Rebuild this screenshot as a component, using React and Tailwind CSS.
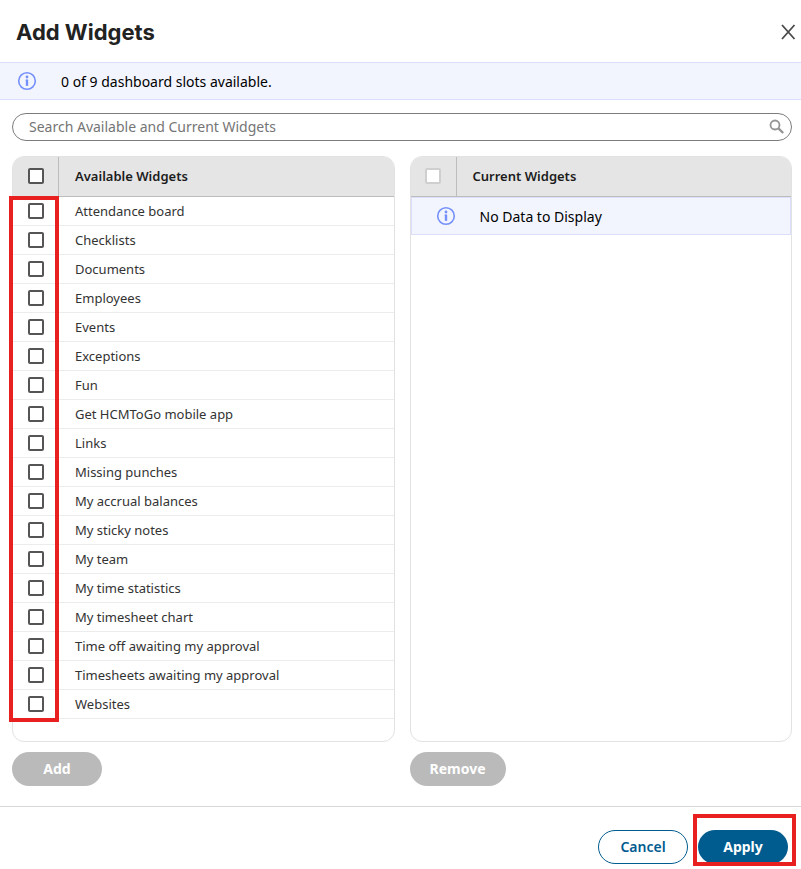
import clsx from 'clsx'

const AVAILABLE = [
  'Attendance board',
  'Checklists',
  'Documents',
  'Employees',
  'Events',
  'Exceptions',
  'Fun',
  'Get HCMToGo mobile app',
  'Links',
  'Missing punches',
  'My accrual balances',
  'My sticky notes',
  'My team',
  'My time statistics',
  'My timesheet chart',
  'Time off awaiting my approval',
  'Timesheets awaiting my approval',
  'Websites',
]

function InfoIcon() {
  return (
    <svg className="size-5 shrink-0" viewBox="0 0 20 20" fill="none" aria-hidden="true">
      <circle cx="10" cy="10" r="8.3" stroke="#7590fb" strokeWidth="1.6" />
      <circle cx="10" cy="6" r="1.4" fill="#7590fb" />
      <path d="M8.8 9.3H10.1V14.8" stroke="#7590fb" strokeWidth="1.4" />
      <path d="M10 8.8V14.8" stroke="#7590fb" strokeWidth="2.4" />
    </svg>
  )
}

function Notice({inset, children}) {
  return (
    <div
      className={clsx(
        'flex h-[38px] items-center gap-6 border-[#dcdffb] bg-[#f2f5fe] text-sm text-black',
        inset ? 'border pl-6' : 'border-y pl-[17px]'
      )}
    >
      <InfoIcon />
      <p className="pt-0.5">{children}</p>
    </div>
  )
}

function Checkbox({label, disabled}) {
  return (
    <input
      type="checkbox"
      aria-label={label}
      disabled={disabled}
      className={clsx(
        'block size-4 mx-auto appearance-none rounded-xs border-2 bg-white checked:bg-[#005c8f]',
        disabled ? 'border-[#cfcfcf]' : 'border-[#555555]'
      )}
    />
  )
}

function Panel({title, disabled, children}) {
  return (
    <div className="grow overflow-hidden rounded-xl border border-[#e2e2e2]">
      <table className="w-full table-fixed border-separate border-spacing-0 text-[13px]">
        <thead className="bg-[#e5e5e5]">
          <tr className="h-10">
            <th className="w-[46px] border-r border-b border-[#bcbcbc] p-0 pb-px">
              <Checkbox label={`Select all ${title}`} disabled={disabled} />
            </th>
            <th className="border-b border-[#bcbcbc] px-4 pt-0 pb-px text-left font-semibold text-[#1c1c1c]">{title}</th>
          </tr>
        </thead>
        <tbody>{children}</tbody>
      </table>
    </div>
  )
}

function WidgetRow({name}) {
  return (
    <tr className="h-[29px]">
      <td className="border-b border-[#ececec] p-0">
        <Checkbox label={name} />
      </td>
      <td className="border-b border-[#ececec] px-4 py-0">{name}</td>
    </tr>
  )
}

export default function App() {
  return (
    <main className="min-h-screen bg-white font-['Noto_Sans',sans-serif] text-sm text-[#333333]">
      <header className="flex h-[62px] items-center justify-between pt-0.5 pr-px pl-4">
        <h1 className="pt-0.5 font-[Inter,sans-serif] text-[22px] font-bold text-[#222222]">Add Widgets</h1>
        <button type="button" aria-label="Close" className="p-1">
          <svg className="size-4" viewBox="0 0 16 16" fill="none" stroke="#4a4a4a" strokeWidth="1.8">
            <path d="M2 1L14.5 15M14.5 1L2 15" />
          </svg>
        </button>
      </header>

      <Notice>0 of 9 dashboard slots available.</Notice>

      <div className="pt-[13px] pr-[9px] pb-5 pl-3">
        <label className="flex h-7 items-center rounded-full border border-[#7c7c7c] pr-1.5 pl-4">
          <input
            type="text"
            aria-label="Search widgets"
            placeholder="Search Available and Current Widgets"
            className="min-w-0 grow outline-none placeholder:text-[#757575]"
          />
          <svg className="size-4" viewBox="0 0 16 16" fill="none" stroke="#949494" aria-hidden="true">
            <circle cx="6" cy="6" r="4.5" strokeWidth="1.8" />
            <path d="M9.2 9.2L14.2 14" strokeWidth="2.4" />
          </svg>
        </label>

        <div className="mt-[15px] grid grid-cols-2 gap-x-[15px]">
          <section className="flex flex-col items-start gap-[10px]">
            <div className="relative flex min-h-[586px] w-full">
              <Panel title="Available Widgets">
                {AVAILABLE.map((name) => (
                  <WidgetRow key={name} name={name} />
                ))}
              </Panel>
              <div className="pointer-events-none absolute top-10 bottom-5 -left-[3px] w-[50px] border-4 border-[#e8201f]" />
            </div>
            <button type="button" className="h-[34px] min-w-[90px] rounded-full bg-[#bababa] px-5 font-bold text-white">
              Add
            </button>
          </section>

          <section className="flex flex-col items-start gap-[10px]">
            <div className="flex min-h-[586px] w-full">
              <Panel title="Current Widgets" disabled>
                <tr>
                  <td colSpan={2} className="p-0">
                    <Notice inset>No Data to Display</Notice>
                  </td>
                </tr>
              </Panel>
            </div>
            <button type="button" className="h-[34px] min-w-[90px] rounded-full bg-[#bababa] px-5 font-bold text-white">
              Remove
            </button>
          </section>
        </div>
      </div>

      <footer className="flex justify-end gap-[10px] border-t border-[#d6d6d6] pt-[23px] pr-[13px]">
        <button
          type="button"
          className="h-[34px] min-w-[90px] rounded-full border border-[#005c8f] bg-white px-5 font-semibold text-[#005c8f]"
        >
          Cancel
        </button>
        <div className="relative">
          <button type="button" className="h-[34px] min-w-[90px] rounded-full bg-[#005c8f] px-5 font-bold text-white">
            Apply
          </button>
          <div className="pointer-events-none absolute -top-4 -right-2 -bottom-[2px] -left-[5px] border-4 border-[#e8201f]" />
        </div>
      </footer>
    </main>
  )
}
